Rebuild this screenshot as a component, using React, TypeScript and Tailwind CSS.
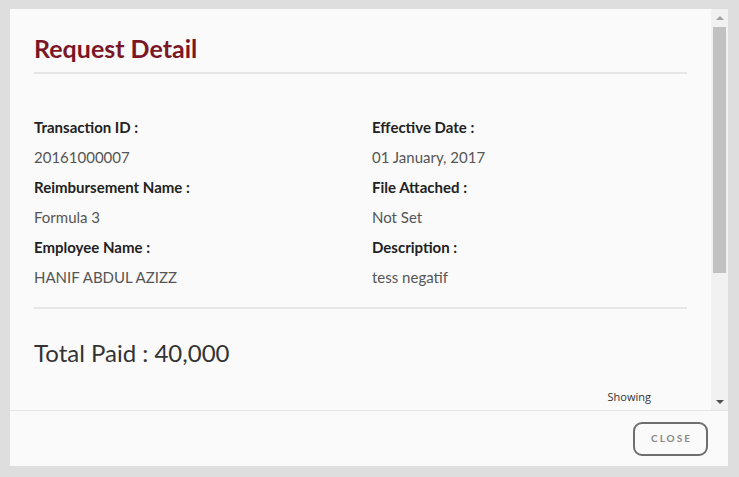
import React from "react";

const font = { fontFamily: "Lato, 'Noto Sans', sans-serif" };

function Field({ label, value }: { label: string; value: string }) {
  return (
    <div>
      <div className="text-[15px] leading-[30px] font-bold text-[#222222]">{label}</div>
      <div className="text-[15px] leading-[30px] text-[#555555]">{value}</div>
    </div>
  );
}

export default function App() {
  return (
    <div className="w-[739px] h-[477px] bg-[#dedede] pt-[9px] pl-[10px]" style={font}>
      <div className="w-[718px] h-[457px] bg-[#fafafa] flex flex-col">
        <div className="flex h-[401px]">
          <div className="flex-1 overflow-hidden pl-6 pr-6 relative">
            <h2 className="mt-[24px] text-[25px] leading-[30px] font-bold text-[#7b1626]">
              Request Detail
            </h2>
            <div className="mt-[9px] border-t-2 border-[#e6e6e6]" />
            <div className="mt-[38px] flex">
              <div className="w-[338px]">
                <Field label="Transaction ID :" value="20161000007" />
                <Field label="Reimbursement Name :" value="Formula 3" />
                <Field label="Employee Name :" value="HANIF ABDUL AZIZZ" />
              </div>
              <div className="flex-1">
                <Field label="Effective Date :" value="01 January, 2017" />
                <Field label="File Attached :" value="Not Set" />
                <Field label="Description :" value="tess negatif" />
              </div>
            </div>
            <div className="mt-[15px] border-t-2 border-[#e6e6e6]" />
            <div className="mt-[29px] text-[24px] leading-[30px] text-[#333333]">
              Total Paid : 40,000
            </div>
            <div className="mt-[22px] flex justify-end pr-[36px]">
              <span
                className="text-[11px] leading-[14px] text-[#333333]"
                style={{ fontFamily: "'Open Sans', sans-serif" }}
              >
                Showing
              </span>
            </div>
          </div>
          <div className="w-[17px] bg-[#f1f1f1] flex flex-col items-center">
            <div className="h-[17px] w-full flex items-center justify-center">
              <div className="w-0 h-0 border-l-[4px] border-r-[4px] border-b-[4px] border-l-transparent border-r-transparent border-b-[#a3a3a3]" />
            </div>
            <div className="mt-[1px] h-[246px] w-[13px] bg-[#c1c1c1]" />
            <div className="flex-1" />
            <div className="h-[17px] w-full flex items-center justify-center">
              <div className="w-0 h-0 border-l-[4px] border-r-[4px] border-t-[4px] border-l-transparent border-r-transparent border-t-[#505050]" />
            </div>
          </div>
        </div>
        <div className="flex-1 border-t border-[#e5e5e5] flex items-center justify-end pr-[20px]">
          <button className="w-[75px] h-[34px] border-2 border-[#6e6e6e] rounded-[9px] text-[10px] font-bold tracking-[2px] text-[#888888] flex items-center justify-center pl-[2px]">
            CLOSE
          </button>
        </div>
      </div>
    </div>
  );
}
